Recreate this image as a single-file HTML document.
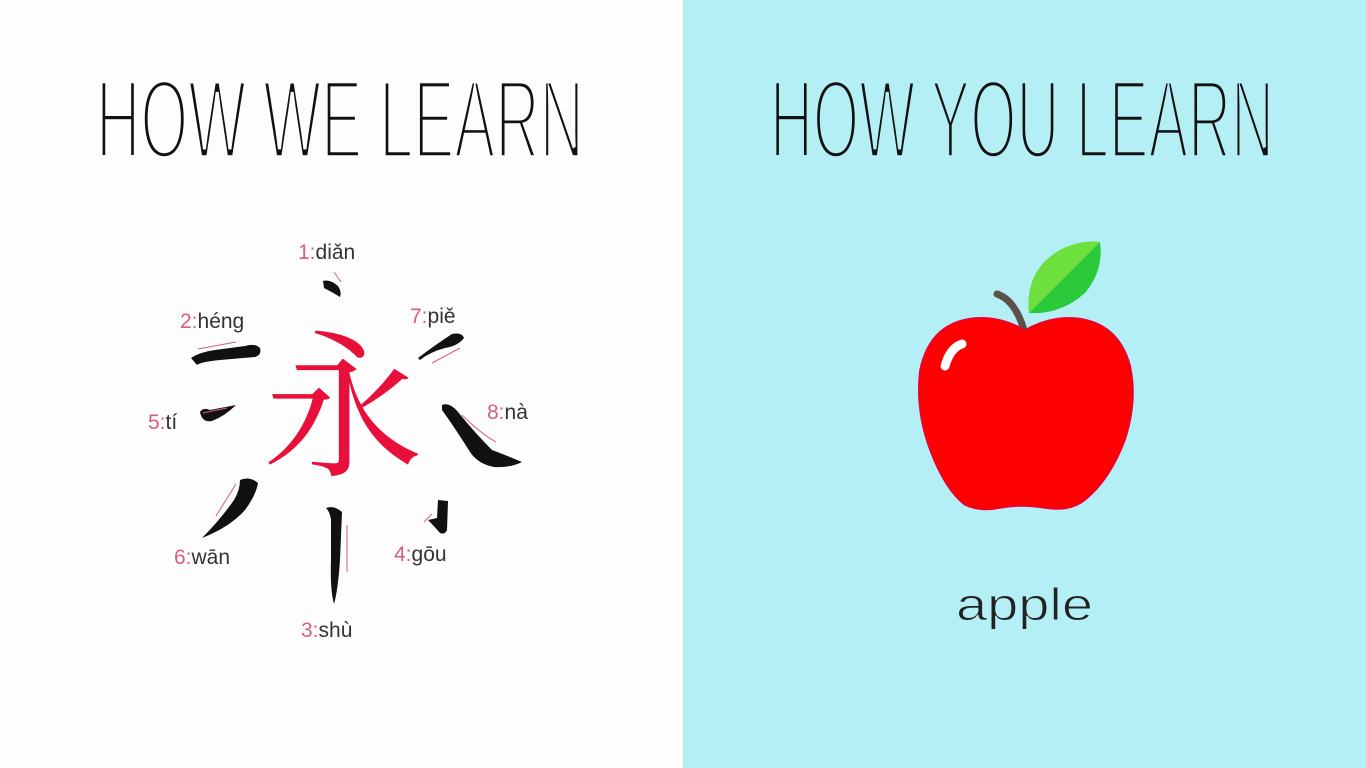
<!DOCTYPE html>
<html><head><meta charset="utf-8"><style>
html,body{margin:0;padding:0;width:1366px;height:768px;overflow:hidden;background:#fdfdfd}
svg{display:block}
.lb{font-family:"Liberation Sans",sans-serif;font-size:21px;fill:#333}
.n{fill:#d8607c}
</style></head><body>
<svg width="1366" height="768" viewBox="0 0 1366 768" xmlns="http://www.w3.org/2000/svg">
<rect x="0" y="0" width="683" height="768" fill="#fdfdfd"/>
<rect x="683" y="0" width="683" height="768" fill="#b5eff6"/>
<text x="96" y="158" font-family="Liberation Sans, sans-serif" font-size="112" textLength="488" lengthAdjust="spacingAndGlyphs" fill="#111" stroke="#fdfdfd" stroke-width="5.5">HOW WE LEARN</text>
<text x="770" y="158" font-family="Liberation Sans, sans-serif" font-size="112" textLength="504" lengthAdjust="spacingAndGlyphs" fill="#111" stroke="#b5eff6" stroke-width="5.5">HOW YOU LEARN</text>

<text class="lb" x="298" y="259"><tspan class="n">1:</tspan>diǎn</text>
<text class="lb" x="180" y="328"><tspan class="n">2:</tspan>héng</text>
<text class="lb" x="410" y="323"><tspan class="n">7:</tspan>piě</text>
<text class="lb" x="148" y="429"><tspan class="n">5:</tspan>tí</text>
<text class="lb" x="487" y="419"><tspan class="n">8:</tspan>nà</text>
<text class="lb" x="174" y="564"><tspan class="n">6:</tspan>wān</text>
<text class="lb" x="394" y="561"><tspan class="n">4:</tspan>gōu</text>
<text class="lb" x="301" y="637"><tspan class="n">3:</tspan>shù</text>

<g fill="#111">
<path d="M323 281 Q330 279 338 286 Q342 292 340 297 Q332 292 324 288 Z"/>
<path d="M191 358 Q200 352 215 350 L245 346 Q255 343 260 348 Q262 355 255 357 L220 360 Q200 362 197 365 Z"/>
<path d="M418 358 Q435 345 452 334 Q462 332 464 338 Q458 346 445 348 Q430 352 420 360 Z"/>
<path d="M200 412 Q203 407 210 410 L236 405 Q225 416 212 421 Q202 423 200 412 Z"/>
<path d="M442 405 Q450 402 458 412 Q475 433 492 450 Q508 456 522 462 Q510 468 494 467 Q478 464 470 452 Q455 428 442 410 Z"/>
<path d="M240 480 Q250 476 258 483 Q256 495 245 510 Q230 527 202 538 Q220 520 234 500 Q240 490 240 480 Z"/>
<path d="M326 508 Q334 505 342 512 L340 560 Q338 590 334 604 Q330 590 331 560 L331 520 Q330 512 326 508 Z"/>
<path d="M438 500 L448 501 L447 530 Q445 535 440 533 Q433 525 428 520 L437 518 Z"/>
</g>
<g stroke="#d8607c" stroke-width="1" fill="none">
<path d="M334 272 L341 282"/><path d="M198 349 L236 342"/><path d="M460 348 L432 363"/>
<path d="M203 413 L227 408"/><path d="M462 415 Q480 433 496 442"/><path d="M236 484 L216 516"/>
<path d="M347 525 L347 572"/><path d="M432 514 L424 522"/>
</g>
<text x="343" y="464" text-anchor="middle" font-family="Noto Serif CJK SC, Noto Sans CJK SC, serif" font-size="160" fill="#e8103a">永</text>

<path d="M997 294 Q1015 300 1024 330" stroke="#5a524a" stroke-width="7" fill="none" stroke-linecap="round"/>
<path d="M1029 313 Q1025 270 1060 250 Q1080 240 1100 242 Q1104 270 1085 293 Q1060 315 1029 313 Z" fill="#2cc93a"/>
<path d="M1029 313 Q1025 270 1060 250 Q1080 240 1100 242 Z" fill="#6ee03d"/>
<path d="M1025 330 Q1000 316 975 318 Q930 322 920 370 Q915 410 930 450 Q945 490 965 505 Q980 512 1000 508 Q1020 504 1045 508 Q1070 512 1085 500 Q1110 480 1125 440 Q1138 400 1130 365 Q1118 322 1075 318 Q1050 316 1025 330 Z" fill="#fe0000" stroke="#e6003a" stroke-width="1.5"/>
<path d="M945 366 Q950 348 962 344" stroke="#fff" stroke-width="9" fill="none" stroke-linecap="round"/>

<text x="956" y="620" textLength="137" lengthAdjust="spacingAndGlyphs" font-family="Liberation Sans, sans-serif" font-size="45" fill="#222" stroke="#b5eff6" stroke-width="1">apple</text>
</svg>
</body></html>
